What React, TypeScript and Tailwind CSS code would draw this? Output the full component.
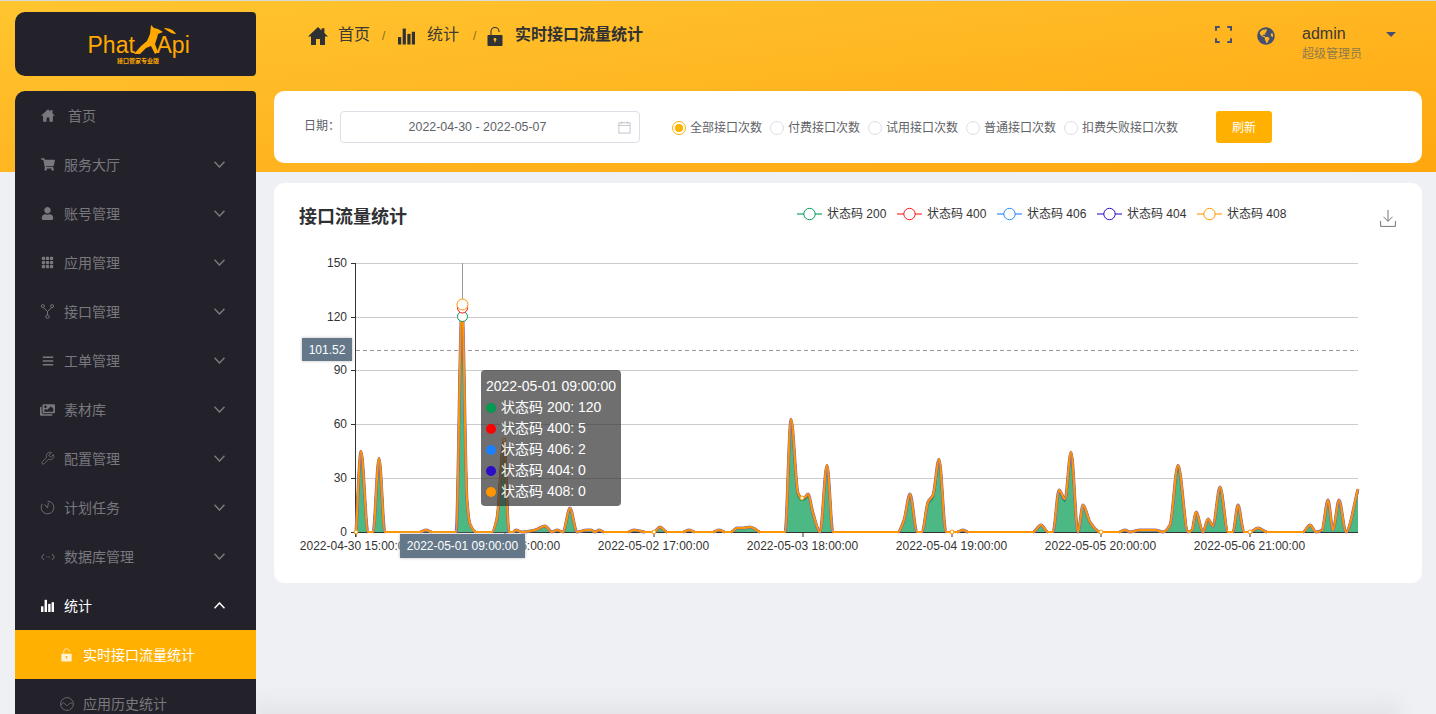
import { FaShoppingCart, FaUser, FaBars, FaImages, FaGlobeAmericas } from 'react-icons/fa';
import { BsGrid3X3GapFill } from 'react-icons/bs';
import { LuWrench } from 'react-icons/lu';

const FONT = 'font-["Liberation_Sans","Noto_Sans_CJK_SC",sans-serif]';

function HomeIcon({ className }: { className?: string }) {
  return (
    <svg viewBox="0 0 20 18" className={className} fill="currentColor">
      <path d="M10 0 0 9.4h3V18h5v-6h4v6h5V9.4h3l-3.6-3.4V1.2h-2.8v2.2z" />
    </svg>
  );
}

function BarsIcon({ className }: { className?: string }) {
  return (
    <svg viewBox="0 0 16 16" className={className} fill="currentColor">
      <rect x="0" y="9" width="3" height="7" />
      <rect x="4.4" y="1" width="3" height="15" />
      <rect x="8.8" y="6" width="3" height="10" />
      <rect x="13" y="4" width="3" height="12" />
    </svg>
  );
}

function LockIcon({ className, keyColor }: { className?: string; keyColor: string }) {
  return (
    <svg viewBox="0 0 16 20" className={className} fill="currentColor">
      <path d="M4 9V5.5a4 4 0 0 1 8 0V6" fill="none" stroke="currentColor" strokeWidth="1.1" />
      <rect x="0.5" y="9" width="15" height="11" rx="0.8" />
      <circle cx="8" cy="13.5" r="1.4" fill={keyColor} />
      <rect x="7.5" y="14" width="1" height="2.4" fill={keyColor} />
    </svg>
  );
}

function ForkIcon() {
  return (
    <svg viewBox="0 0 14 16" className="h-[15px] w-[13px]" fill="none" stroke="currentColor" strokeWidth="1">
      <circle cx="2" cy="2.2" r="1.6" />
      <circle cx="12" cy="2.2" r="1.6" />
      <circle cx="7" cy="13.6" r="1.8" />
      <path d="M2.6 3.8 7 8l4.4-4.2M7 8v3.8" />
    </svg>
  );
}

function TimerIcon() {
  return (
    <svg viewBox="0 0 16 16" className="h-[15px] w-[15px]" fill="none" stroke="currentColor" strokeWidth="0.9">
      <path d="M8 1.2a6.8 6.8 0 1 1-5.6 3" />
      <path d="M5 4.8 8 8.4 9 3" />
    </svg>
  );
}

function CodeIcon() {
  return (
    <svg viewBox="0 0 14 8" className="h-[8px] w-[14px]" fill="none" stroke="currentColor" strokeWidth="0.9">
      <path d="M3 1 .6 4 3 7M11 1l2.4 3L11 7" />
      <path d="M5 4h.8M6.7 4h.8M8.4 4h.8" />
    </svg>
  );
}

function WaveIcon() {
  return (
    <svg viewBox="0 0 14 14" className="h-[14px] w-[14px]" fill="none" stroke="currentColor" strokeWidth="0.8">
      <circle cx="7" cy="7" r="6.4" />
      <path d="M1.4 8c1.4-2.6 2.4-2.8 3.6-1s2 2.2 3.4.6 2.4-2.2 4.2-.8" />
    </svg>
  );
}

function Chevron({ up }: { up?: boolean }) {
  return (
    <svg viewBox="0 0 11 7" className="h-[7px] w-[11px]" fill="none" stroke="currentColor" strokeWidth="1.5">
      <path d={up ? 'M.5 6.3 5.5 1l5 5.3' : 'M.5.7 5.5 6l5-5.3'} />
    </svg>
  );
}

const menuItems = [
  { label: '服务大厅', icon: <FaShoppingCart className="h-[13px] w-[14px]" /> },
  { label: '账号管理', icon: <FaUser className="h-[13px] w-[13px]" /> },
  { label: '应用管理', icon: <BsGrid3X3GapFill className="h-[13px] w-[13px]" /> },
  { label: '接口管理', icon: <ForkIcon /> },
  { label: '工单管理', icon: <FaBars className="h-[12px] w-[12px]" /> },
  { label: '素材库', icon: <FaImages className="h-[14px] w-[15px]" /> },
  { label: '配置管理', icon: <LuWrench className="h-[15px] w-[15px]" strokeWidth={1.2} /> },
  { label: '计划任务', icon: <TimerIcon /> },
  { label: '数据库管理', icon: <CodeIcon /> },
];

function Sidebar() {
  return (
    <aside className="ml-[15px] flex w-[241px] shrink-0 flex-col pt-3">
      <div className="h-16 rounded-l-[10px] rounded-r bg-[#23222a]">
        <svg viewBox="15 12 241 64" className="h-16 w-[241px]">
          <text x="87.5" y="52.5" fontSize="23" fill="#ffa800" fontFamily="Liberation Sans">Phat</text>
          <text x="156.5" y="52.5" fontSize="23" fill="#ffa800" fontFamily="Liberation Sans">Api</text>
          <path
            d="M134 54l7-8 6-5 3-7 1-9 3 3 4 1 5 3-5 2-1 4-2 6 3 8-3 2-4-8-5 2-6 6z"
            fill="#ffa800"
          />
          <path d="M164 28c5 0 10 2 12 6-4 0-6-2-8-3-2-1-3-2-4-3z" fill="#ffa800" />
          <text x="117" y="62.5" fontSize="6" fontWeight="700" fill="#ffa800" fontFamily="Noto Sans CJK SC">接口管家专业版</text>
        </svg>
      </div>
      <nav className="mt-[15px] flex-1 overflow-hidden rounded-tl-[10px] rounded-tr bg-[#23222a] text-sm text-[#78787e]">
        <div className="flex h-[49px] items-center pl-[26px]">
          <HomeIcon className="h-[13px] w-[14px]" />
          <span className="ml-[13px]">首页</span>
        </div>
        {menuItems.map((item) => (
          <div key={item.label} className="flex h-[49px] items-center pr-[31px]">
            <span className="flex w-[49px] justify-center pl-[16px]">{item.icon}</span>
            <span className="flex-1">{item.label}</span>
            <Chevron />
          </div>
        ))}
        <div className="flex h-[49px] items-center pr-[31px] text-white">
          <span className="flex w-[49px] justify-center pl-[16px]">
            <BarsIcon className="h-[13px] w-[13px]" />
          </span>
          <span className="flex-1">统计</span>
          <Chevron up />
        </div>
        <div className="flex h-[49px] items-center bg-[#ffb000] pl-[46px] text-white">
          <LockIcon className="h-[15px] w-[11px] text-[#fff3d6]" keyColor="#ffb000" />
          <span className="ml-[11px]">实时接口流量统计</span>
        </div>
        <div className="flex h-[49px] items-center pl-[45px]">
          <WaveIcon />
          <span className="ml-[9px]">应用历史统计</span>
        </div>
      </nav>
    </aside>
  );
}

function Topbar() {
  return (
    <header className="flex h-[79px] items-start pl-[34px] pr-[26px] pt-[17px] text-[#303133]">
      <div className="flex h-[38px] items-center text-base text-[#3d3a33]">
        <HomeIcon className="h-[18px] w-[20px] text-[#303133]" />
        <span className="ml-[10px] -translate-y-px">首页</span>
        <span className="ml-3 mr-[13px] w-[3px] text-xs text-[#8a6a20]">/</span>
        <BarsIcon className="h-[18px] w-[17px] text-[#303133]" />
        <span className="ml-3 -translate-y-px">统计</span>
        <span className="ml-[14px] mr-[11px] w-[3px] text-xs text-[#8a6a20]">/</span>
        <LockIcon className="h-[20px] w-[16px] text-[#303133]" keyColor="#ffb92a" />
        <span className="ml-3 -translate-y-px font-semibold text-[#303133]">实时接口流量统计</span>
      </div>
      <div className="ml-auto flex items-start">
        <svg viewBox="0 0 18 18" className="mt-[9px] h-[17px] w-[17px] text-[#46506e]" fill="none" stroke="currentColor" strokeWidth="2.2">
          <path d="M1 5V1h4M13 1h4v4M17 13v4h-4M5 17H1v-4" />
        </svg>
        <FaGlobeAmericas className="ml-[25px] mt-[10px] h-[18px] w-[18px] text-[#46506e]" />
        <div className="ml-[27px] w-[60px]">
          <p className="mt-[7px] text-base leading-5 text-[#3d3a33]">admin</p>
          <p className="mt-[2px] text-xs leading-4 text-[#8f7a4a]">超级管理员</p>
        </div>
        <span className="ml-[24px] mt-[15px] h-0 w-0 border-x-[5px] border-t-[5px] border-x-transparent border-t-[#46506e]" />
      </div>
    </header>
  );
}

const radios = ['全部接口次数', '付费接口次数', '试用接口次数', '普通接口次数', '扣费失败接口次数'];

function FilterCard() {
  return (
    <section className="mt-3 flex h-[72px] items-center rounded-[10px] bg-white pl-[30px] text-xs text-[#606266]">
      <span className="w-[36px] -translate-y-px">日期：</span>
      <div className="relative flex h-8 w-[300px] items-center justify-center rounded border border-[#dcdfe6] pr-[25px] pt-px text-[12.4px]">
        2022-04-30 - 2022-05-07
        <svg viewBox="0 0 14 14" className="absolute right-[8px] top-[9px] h-[13px] w-[13px] text-[#b0b3bb]" fill="none" stroke="currentColor" strokeWidth="0.8">
          <rect x="1" y="2" width="12" height="11" />
          <path d="M1 4.8h12M4 .6V3M10 .6V3" />
        </svg>
      </div>
      <div className="ml-8 flex translate-y-px items-center">
        {radios.map((label, i) => (
          <label key={label} className="mr-2 flex items-center">
            {i === 0 ? (
              <span className="flex h-[14px] w-[14px] items-center justify-center rounded-full border border-[#ffb000]">
                <span className="h-2 w-2 rounded-full bg-[#ffb000]" />
              </span>
            ) : (
              <span className="h-[14px] w-[14px] rounded-full border border-[#dcdfe6]" />
            )}
            <span className="ml-1">{label}</span>
          </label>
        ))}
      </div>
      <button className="ml-[30px] h-8 w-14 rounded-[3px] bg-[#ffb000] pt-[2px] text-xs text-white">刷新</button>
    </section>
  );
}

const legend = [
  { name: '状态码 200', color: '#0a9a5a', line: '#46b583' },
  { name: '状态码 400', color: '#ff1a1a', line: '#ff5a5a' },
  { name: '状态码 406', color: '#2f8bff', line: '#5aa5ff' },
  { name: '状态码 404', color: '#2a10c8', line: '#6a55d8' },
  { name: '状态码 408', color: '#ff9a00', line: '#ffb444' },
];

// outline of the stacked top series, in chart pixels
const POINTS: [number, number][] = [
  [356, 532], [361, 451], [368, 532], [373, 532], [379, 458], [385, 532],
  [420, 532], [426, 530], [432, 532], [456, 532], [462, 304], [467, 500], [470, 524], [476, 532],
  [492, 532], [497, 518], [504, 440], [509, 532], [513, 532], [516, 530], [522, 532],
  [535, 530], [545, 526], [552, 532], [557, 530], [563, 532], [570, 508], [577, 532],
  [582, 531], [586, 530], [591, 530], [595, 532], [599, 530], [604, 532], [628, 532], [634, 530], [640, 531], [645, 532],
  [654, 532], [660, 527], [667, 532], [683, 532], [689, 530], [695, 532], [713, 532], [719, 530], [725, 532],
  [731, 532], [737, 528], [744, 528], [750, 527], [755, 529], [760, 532], [785, 532], [791, 419],
  [798, 493], [802, 498], [805, 497], [808, 494], [813, 513], [820, 532], [827, 465], [833, 532],
  [898, 532], [904, 520], [910, 494], [917, 532], [922, 532], [928, 502], [933, 495], [939, 459], [946, 532],
  [957, 532], [963, 530], [968, 532], [1033, 532], [1041, 525], [1048, 532], [1053, 532], [1059, 490], [1065, 499],
  [1071, 452], [1078, 532], [1083, 505], [1090, 522], [1100, 532], [1119, 532], [1125, 530], [1130, 532],
  [1140, 530], [1155, 530], [1163, 532], [1170, 525], [1178, 465], [1188, 532], [1192, 530], [1196, 512], [1203, 532],
  [1208, 519], [1213, 526], [1220, 487], [1228, 532], [1233, 532], [1238, 505], [1244, 532], [1250, 532],
  [1258, 528], [1267, 532], [1303, 532], [1310, 525], [1316, 532], [1322, 530], [1328, 500], [1333, 530],
  [1339, 500], [1346, 532], [1358, 489],
];

// monotone cubic through the points; skipFlat leaves out the runs along the axis
function buildPath(k: number, skipFlat = false) {
  const pts = POINTS.map(([x, y]) => [x, 532 - (532 - y) * k] as const);
  const slopes = pts.slice(1).map((p, i) => (p[1] - pts[i][1]) / (p[0] - pts[i][0]));
  const tan = pts.map((_, i) => {
    if (i === 0) return slopes[0];
    if (i === pts.length - 1) return slopes[i - 1];
    const a = slopes[i - 1];
    const b = slopes[i];
    return a * b <= 0 ? 0 : (2 * a * b) / (a + b);
  });
  let d = `M${pts[0][0]} ${pts[0][1]}`;
  for (let i = 1; i < pts.length; i++) {
    const [x0, y0] = pts[i - 1];
    const [x1, y1] = pts[i];
    if (skipFlat && y0 === 532 && y1 === 532) {
      d += ` M${x1} ${y1}`;
      continue;
    }
    const h = (x1 - x0) / 3;
    d += ` C${x0 + h} ${y0 + tan[i - 1] * h} ${x1 - h} ${y1 - tan[i] * h} ${x1} ${y1}`;
  }
  return d;
}

const yTicks = [
  { label: '150', y: 263 },
  { label: '120', y: 317 },
  { label: '90', y: 370 },
  { label: '60', y: 424 },
  { label: '30', y: 478 },
  { label: '0', y: 532 },
];

const xTicks = [
  { label: '2022-04-30 15:00:00', x: 355.5 },
  { label: '2022-05-01 16:00:00', x: 504.5 },
  { label: '2022-05-02 17:00:00', x: 653.5 },
  { label: '2022-05-03 18:00:00', x: 802.5 },
  { label: '2022-05-04 19:00:00', x: 951.5 },
  { label: '2022-05-05 20:00:00', x: 1100.5 },
  { label: '2022-05-06 21:00:00', x: 1249.5 },
];

const dots: [number, number][] = [[356, 532], [504, 440], [654, 532], [802, 498], [952, 532], [1101, 532], [1250, 532]];

function Chart() {
  return (
    <svg viewBox="274 240 1148 343" className="absolute left-0 top-[57px] h-[343px] w-[1148px]">
      {yTicks.map((t) => (
        <g key={t.label}>
          <line x1="351" x2="356" y1={t.y + 0.5} y2={t.y + 0.5} stroke="#333" />
          {t.y !== 532 && <line x1="356" x2="1358" y1={t.y + 0.5} y2={t.y + 0.5} stroke="#ccc" />}
          <text x="347" y={t.y + 4} textAnchor="end" fontSize="12" fill="#333">{t.label}</text>
        </g>
      ))}
      <line x1="462.5" x2="462.5" y1="263" y2="532" stroke="#999" />
      <line x1="356" x2="1358" y1="350.5" y2="350.5" stroke="#999" strokeDasharray="4 3" />
      <line x1="355.5" x2="355.5" y1="263" y2="537" stroke="#333" />
      <line x1="351" x2="1358" y1="532.5" y2="532.5" stroke="#333" />
      <path d={`${buildPath(0.94)} L1358 532 L356 532 Z`} fill="#4cb884" />
      <path d={buildPath(0.94, true)} fill="none" stroke="#0a9a5a" strokeWidth="2" />
      <path d={buildPath(0.985, true)} fill="none" stroke="#ff1a1a" strokeWidth="2" />
      <path d={buildPath(0.995, true)} fill="none" stroke="#2f8bff" strokeWidth="2" />
      <path d={buildPath(0.998, true)} fill="none" stroke="#8a6aa8" strokeWidth="3" />
      <path d={buildPath(1)} fill="none" stroke="#ff9500" strokeWidth="2" />
      {xTicks.map((t) => (
        <g key={t.x}>
          <line x1={t.x + 0.5} x2={t.x + 0.5} y1="533" y2="537" stroke="#333" />
          <text x={t.x} y="550" textAnchor="middle" fontSize="12" fill="#333">{t.label}</text>
        </g>
      ))}
      {dots.map(([x, y]) => (
        <circle key={x} cx={x} cy={y} r="2" fill="#fff" stroke="#ff9500" />
      ))}
      <circle cx="462.5" cy="316.5" r="5" fill="#fff" stroke="#0a9a5a" />
      <circle cx="462.5" cy="308" r="5" fill="#fff" stroke="#ff1a1a" />
      <circle cx="462.5" cy="304.5" r="5.5" fill="#fff" stroke="#ff9500" />
    </svg>
  );
}

const tooltipRows = [
  { name: '状态码 200: 120', color: '#009b4f' },
  { name: '状态码 400: 5', color: '#ff0000' },
  { name: '状态码 406: 2', color: '#1a80ff' },
  { name: '状态码 404: 0', color: '#2a0dc8' },
  { name: '状态码 408: 0', color: '#ff9500' },
];

function ChartCard() {
  return (
    <section className="relative mt-5 h-[400px] rounded-[10px] bg-white">
      <div className="flex items-start">
        <h2 className="ml-[25px] mt-[23px] text-lg font-semibold leading-[23px] text-[#303133]">接口流量统计</h2>
        <div className="ml-[390px] mt-[24px] flex h-[14px] items-center gap-[10px]">
          {legend.map((l) => (
            <div key={l.name} className="flex items-center gap-[5px] text-xs text-[#333]">
              <svg viewBox="0 0 25 14" className="h-[14px] w-[25px]">
                <line x1="0" x2="25" y1="7" y2="7" stroke={l.line} strokeWidth="1.5" />
                <circle cx="12.5" cy="7" r="5.7" fill="#fff" stroke={l.color} />
              </svg>
              <span className="w-[60px] whitespace-nowrap">{l.name}</span>
            </div>
          ))}
        </div>
        <svg viewBox="0 0 16 17" className="ml-auto mr-[26px] mt-[27px] h-[17px] w-[16px] text-[#666]" fill="none" stroke="currentColor" strokeWidth="0.9">
          <path d="M8 0v11M3.5 6.8 8 11.4l4.5-4.6M.6 11v5.4h14.8V11" />
        </svg>
      </div>
      <Chart />
      <div className="absolute left-[28px] top-[155px] flex h-[23px] w-[50px] items-center justify-center bg-[#64788a] text-xs text-white shadow-[0_0_3px_#bbb]">101.52</div>
      <div className="absolute left-[126px] top-[351px] flex h-[24px] w-[125px] items-center justify-center whitespace-nowrap bg-[#64788a] text-xs text-white shadow-[0_0_3px_#bbb]">2022-05-01 09:00:00</div>
      <div className="absolute left-[207px] top-[187px] h-[136px] w-[140px] rounded bg-[rgba(50,50,50,0.7)] px-[5px] pt-[6px] text-sm leading-[21px] text-white">
        <div className="whitespace-nowrap">2022-05-01 09:00:00</div>
        {tooltipRows.map((r) => (
          <div key={r.name} className="flex items-center whitespace-nowrap">
            <span className="mr-[5px] h-[10px] w-[10px] rounded-full" style={{ backgroundColor: r.color }} />
            {r.name}
          </div>
        ))}
      </div>
    </section>
  );
}

export default function App() {
  return (
    <div className={`relative flex h-[714px] w-full overflow-hidden bg-[#eff0f4] ${FONT}`}>
      <div className="absolute inset-x-0 top-0 h-[172px] border-t border-[#d9d9d9] bg-gradient-to-br from-[#ffc52f] to-[#ffa70d]" />
      <div className="absolute bottom-[-6px] left-[250px] right-[36px] h-6 bg-gradient-to-b from-transparent to-[#dcdde0] blur-sm" />
      <div className="relative flex w-full">
        <Sidebar />
        <main className="ml-[18px] mr-[14px] flex-1">
          <Topbar />
          <FilterCard />
          <ChartCard />
        </main>
      </div>
    </div>
  );
}
